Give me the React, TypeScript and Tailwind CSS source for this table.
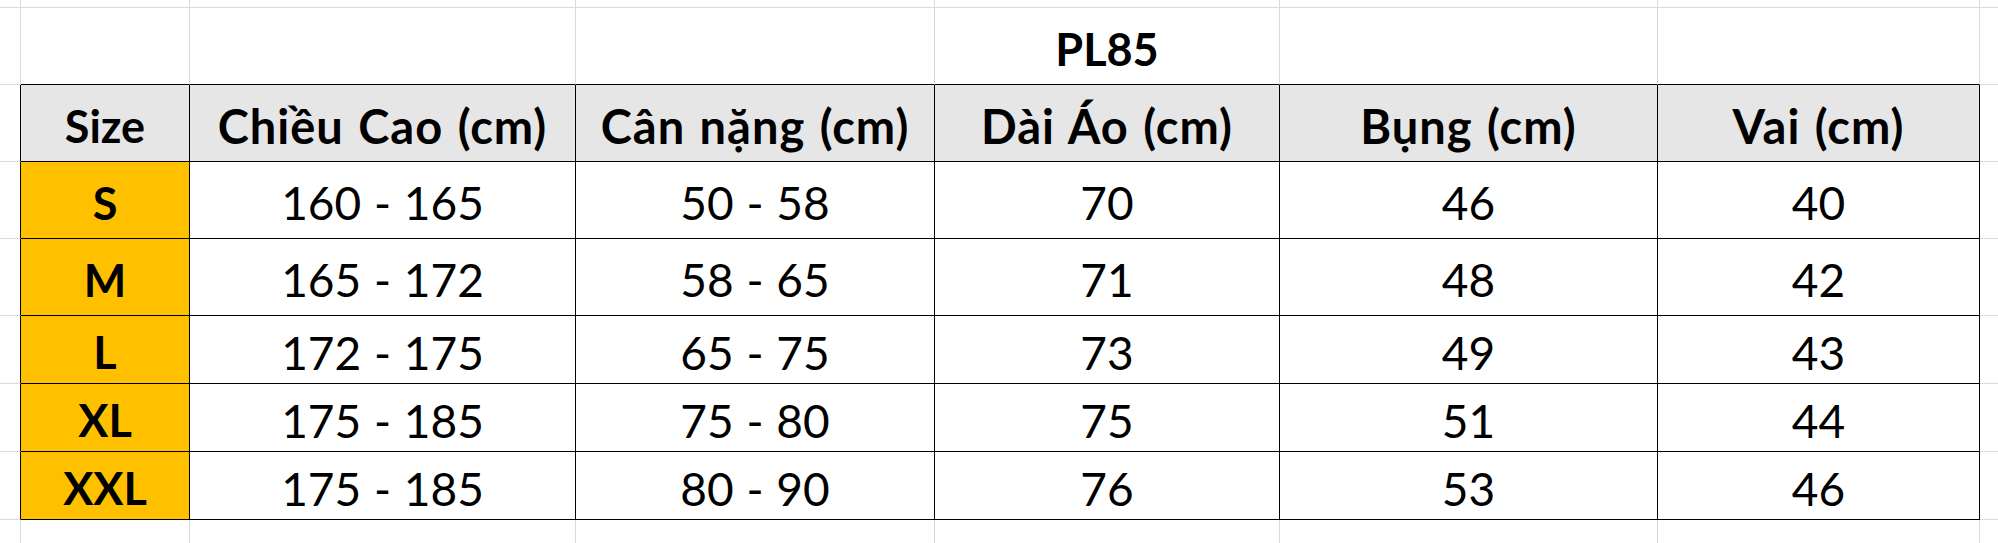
import React from "react";

const headers = ["Size", "Chiều Cao (cm)", "Cân nặng (cm)", "Dài Áo (cm)", "Bụng (cm)", "Vai (cm)"];

const rows: string[][] = [
  ["S", "160 - 165", "50 - 58", "70", "46", "40"],
  ["M", "165 - 172", "58 - 65", "71", "48", "42"],
  ["L", "172 - 175", "65 - 75", "73", "49", "43"],
  ["XL", "175 - 185", "75 - 80", "75", "51", "44"],
  ["XXL", "175 - 185", "80 - 90", "76", "53", "46"],
];

// sheet is 9 rows x 8 columns; the table sits in rows 2-7, columns 1-6
const ROWS = 9;
const COLS = 8;

type Kind = "title" | "head" | "size" | "data" | "none";

function cellText(r: number, c: number): { text: string; kind: Kind } {
  if (r === 1 && c === 4) return { text: "PL85", kind: "title" };
  if (r === 2 && c >= 1 && c <= 6) return { text: headers[c - 1], kind: c === 1 ? "size" : "head" };
  if (r >= 3 && r <= 7 && c >= 1 && c <= 6) return { text: rows[r - 3][c - 1], kind: c === 1 ? "size" : "data" };
  return { text: "", kind: "none" };
}

const textStyle: Record<Kind, string> = {
  title: "text-[45px] font-bold",
  head: "text-[47px] font-bold tracking-[1px] [word-spacing:2px]",
  size: "text-[45px] font-bold",
  data: "text-[46px] font-normal [word-spacing:1px]",
  none: "",
};

const Cell = ({ r, c }: { r: number; c: number }) => {
  const inTable = r >= 2 && r <= 7 && c >= 1 && c <= 6;
  const blackRight = inTable || (c === 0 && r >= 2 && r <= 7);
  const blackBottom = inTable || (r === 1 && c >= 1 && c <= 6);
  const lastCol = c === COLS - 1;
  const lastRow = r === ROWS - 1;

  let bg = "bg-white";
  if (r === 2 && inTable) bg = "bg-[#e7e6e6]";
  else if (c === 1 && inTable) bg = "bg-[#ffc000]";

  const right = lastCol ? "" : blackRight ? "border-r border-r-black" : "border-r border-r-[#dadada]";
  const bottom = lastRow ? "" : blackBottom ? "border-b border-b-black" : "border-b border-b-[#dadada]";

  const { text, kind } = cellText(r, c);

  return (
    <div className={`${bg} ${right} ${bottom} flex items-center justify-center pt-[6px] overflow-visible whitespace-nowrap`}>
      {text && <span className={`leading-none text-black ${textStyle[kind]}`}>{text}</span>}
    </div>
  );
};

export default function App() {
  const cells = [];
  for (let r = 0; r < ROWS; r++) {
    for (let c = 0; c < COLS; c++) {
      cells.push(<Cell key={`${r}-${c}`} r={r} c={c} />);
    }
  }

  return (
    <div
      className="w-[1998px] h-[543px] bg-white overflow-hidden grid grid-cols-[21px_169px_386px_359px_345px_378px_322px_1fr] grid-rows-[8px_77px_77px_77px_77px_68px_68px_68px_1fr]"
      style={{ fontFamily: "Lato, 'Open Sans', sans-serif" }}
    >
      {cells}
    </div>
  );
}
